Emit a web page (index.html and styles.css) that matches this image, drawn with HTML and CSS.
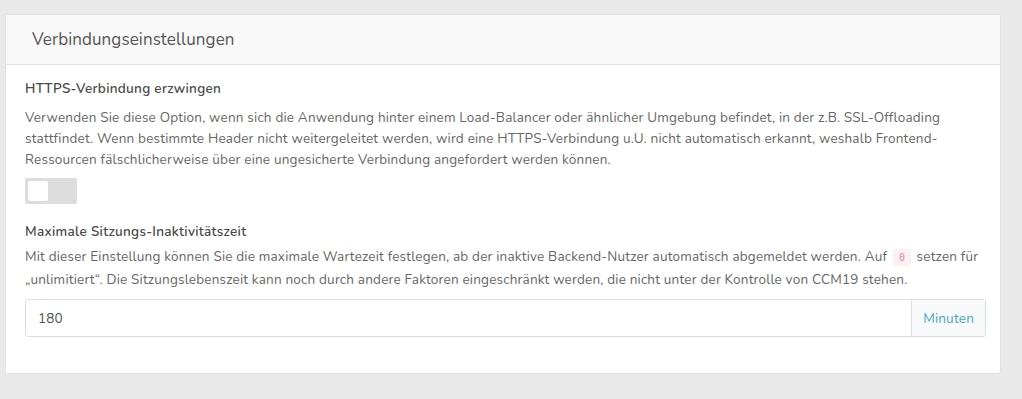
FILE: index.html
```html
<!DOCTYPE html>
<html lang="de">
<head>
    <meta charset="UTF-8">
    <meta name="viewport" content="width=device-width, initial-scale=1.0">
    <title>Verbindungseinstellungen</title>
    <link rel="stylesheet" href="styles.css">
</head>
<body>
    <div class="card">
        <div class="card-header">
            <h2 class="card-title">Verbindungseinstellungen</h2>
        </div>
        <div class="card-body">
            <div class="form-group">
                <label class="form-label">HTTPS-Verbindung erzwingen</label>
                <p class="help-text">Verwenden Sie diese Option, wenn sich die Anwendung hinter einem Load-Balancer oder ähnlicher Umgebung befindet, in der z.B. SSL-Offloading stattfindet. Wenn bestimmte Header nicht weitergeleitet werden, wird eine HTTPS-Verbindung u.U. nicht automatisch erkannt, weshalb Frontend-Ressourcen fälschlicherweise über eine ungesicherte Verbindung angefordert werden können.</p>
                <label class="switch">
                    <input type="checkbox">
                    <span class="slider"></span>
                </label>
            </div>
            <div class="form-group">
                <label class="form-label">Maximale Sitzungs-Inaktivitätszeit</label>
                <p class="help-text help-text-wide">Mit dieser Einstellung können Sie die maximale Wartezeit festlegen, ab der inaktive Backend-Nutzer automatisch abgemeldet werden. Auf <code>0</code> setzen für „unlimitiert“. Die Sitzungslebenszeit kann noch durch andere Faktoren eingeschränkt werden, die nicht unter der Kontrolle von CCM19 stehen.</p>
                <div class="input-group">
                    <input class="form-control" type="text" value="180">
                    <span class="input-addon">Minuten</span>
                </div>
            </div>
        </div>
    </div>
</body>
</html>
```

FILE: styles.css
```css
body {
    font-family: "Nunito", "Noto Sans", sans-serif;
    font-size: 13.5px;
    letter-spacing: 0.2px;
    line-height: 21px;
    color: #666;
    background-color: #e9e9e9;
    margin: 0;
    padding: 14px 21px 0 5px;
}
.card {
    background-color: #fff;
    border: 1px solid #e2e2e2;
    border-radius: 3px;
    overflow: hidden;
}
.card-header {
    background-color: #f9f9f9;
    border-bottom: 1px solid #e3e3e3;
    padding: 0 26px;
    height: 49px;
    display: flex;
    align-items: center;
}
.card-title {
    margin: 0;
    font-size: 17px;
    letter-spacing: 0.1px;
    font-weight: 400;
    color: #555;
}
.card-body {
    padding: 14px 14px 36px 19px;
}
.form-group + .form-group {
    margin-top: 18px;
}
.form-label {
    display: block;
    font-size: 13.5px;
    letter-spacing: 0.3px;
    font-weight: 600;
    color: #4a4a4a;
    line-height: 20px;
}
.help-text {
    margin: 8px 0 8px;
}
.help-text-wide {
    line-height: 23px;
    margin-top: 3px;
}
.switch {
    display: block;
    position: relative;
    width: 52px;
    height: 26px;
}
.switch input {
    display: none;
}
.slider {
    position: absolute;
    inset: 0;
    background-color: #ddd;
    border-radius: 2px;
    cursor: pointer;
}
.slider::before {
    content: "";
    position: absolute;
    left: 3px;
    top: 3px;
    width: 20px;
    height: 20px;
    background-color: #fff;
    border-radius: 2px;
}
code {
    display: inline-block;
    font-family: "DejaVu Sans Mono", monospace;
    font-size: 10px;
    line-height: 17px;
    letter-spacing: 0;
    color: #e8849b;
    background-color: #fbf0f2;
    padding: 0 6px;
    margin: 0 2px;
    border-radius: 3px;
}
.input-group {
    display: flex;
    border: 1px solid #ddd;
    border-radius: 3px;
    height: 36px;
    margin-top: 5px;
}
.form-control {
    flex: 1;
    border: none;
    outline: none;
    padding: 0 12px;
    font-family: inherit;
    font-size: 13.5px;
    letter-spacing: 0.2px;
    color: #555;
    background: transparent;
}
.input-addon {
    display: flex;
    align-items: center;
    padding: 0 11px;
    background-color: #f8f9f9;
    border-left: 1px solid #ddd;
    color: #46a7c2;
}
```
